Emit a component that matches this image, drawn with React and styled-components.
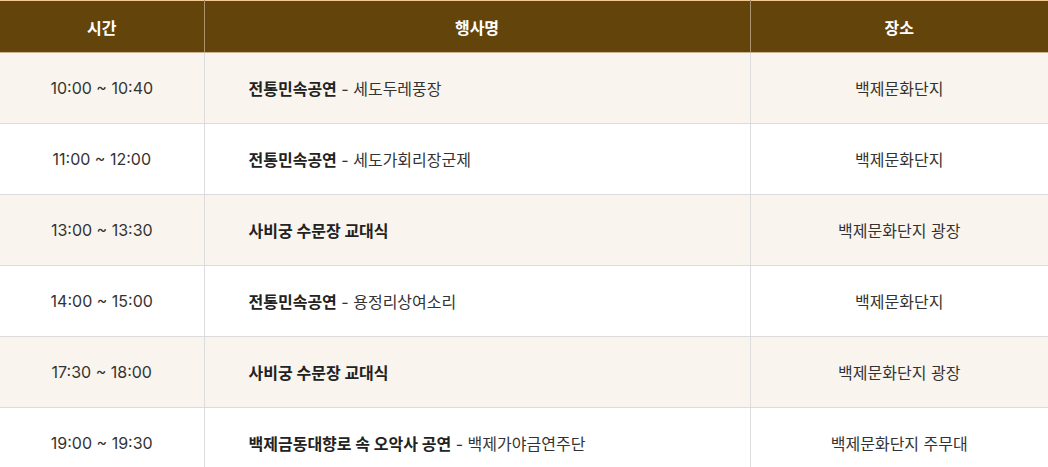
import React from "react";
import styled, { createGlobalStyle } from "styled-components";

const GlobalStyle = createGlobalStyle`
  html, body {
    margin: 0;
    padding: 0;
    background: #fff;
  }
  body {
    font-family: "Inter", "Noto Sans CJK KR", "Noto Sans", sans-serif;
  }
`;

const Table = styled.table`
  width: 1048px;
  border-collapse: collapse;
  table-layout: fixed;
  border-top: 1px solid #f3c892;
`;

const HeadCell = styled.th`
  height: 51px;
  padding: 0;
  background: #63450c;
  color: #fff;
  font-family: "Noto Sans CJK KR", sans-serif;
  font-size: 16px;
  font-weight: 700;
  text-align: center;
  border-bottom: 1px solid #c9b48f;
  border-left: 1px solid #a8936d;

  &:first-child {
    border-left: none;
  }
`;

const Row = styled.tr`
  background: ${(p) => (p.$shaded ? "#f9f5ee" : "#fff")};
`;

const Cell = styled.td`
  height: 70px;
  padding: 0 0 0 ${(p) => (p.$left ? "44px" : "0")};
  font-size: 16px;
  color: #333;
  text-align: ${(p) => (p.$left ? "left" : "center")};
  border-bottom: 1px solid #dcdcdc;
  border-left: 1px solid #dcdcdc;
  white-space: nowrap;

  &:first-child {
    border-left: none;
  }
`;

const Title = styled.strong`
  font-weight: 700;
  color: #222;
`;

const rows = [
  { time: "10:00 ~ 10:40", title: "전통민속공연", sub: "세도두레풍장", place: "백제문화단지" },
  { time: "11:00 ~ 12:00", title: "전통민속공연", sub: "세도가회리장군제", place: "백제문화단지" },
  { time: "13:00 ~ 13:30", title: "사비궁 수문장 교대식", place: "백제문화단지 광장" },
  { time: "14:00 ~ 15:00", title: "전통민속공연", sub: "용정리상여소리", place: "백제문화단지" },
  { time: "17:30 ~ 18:00", title: "사비궁 수문장 교대식", place: "백제문화단지 광장" },
  { time: "19:00 ~ 19:30", title: "백제금동대향로 속 오악사 공연", sub: "백제가야금연주단", place: "백제문화단지 주무대" },
];

export default function App() {
  return (
    <>
      <GlobalStyle />
      <Table>
        <colgroup>
          <col style={{ width: 204 }} />
          <col style={{ width: 546 }} />
          <col style={{ width: 298 }} />
        </colgroup>
        <thead>
          <tr>
            <HeadCell>시간</HeadCell>
            <HeadCell>행사명</HeadCell>
            <HeadCell>장소</HeadCell>
          </tr>
        </thead>
        <tbody>
          {rows.map((r, i) => (
            <Row key={i} $shaded={i % 2 === 0}>
              <Cell>{r.time}</Cell>
              <Cell $left>
                <Title>{r.title}</Title>
                {r.sub && ` - ${r.sub}`}
              </Cell>
              <Cell>{r.place}</Cell>
            </Row>
          ))}
        </tbody>
      </Table>
    </>
  );
}
